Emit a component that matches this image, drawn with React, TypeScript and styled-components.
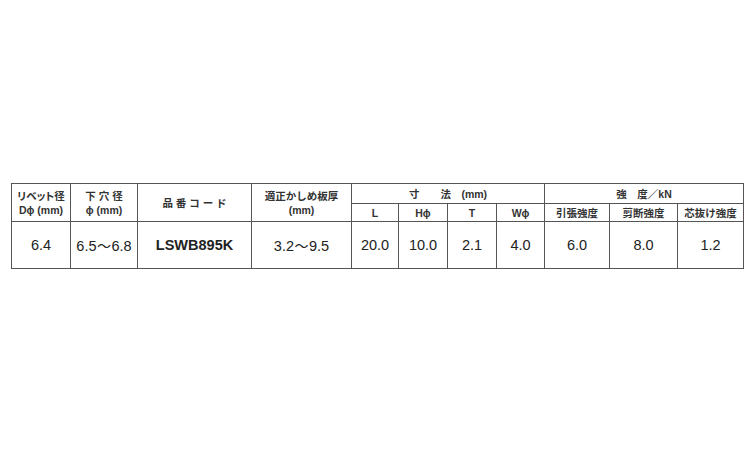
import React from "react";
import styled, { createGlobalStyle } from "styled-components";

const Global = createGlobalStyle`
  html, body { margin: 0; padding: 0; background: #ffffff; }
  body { font-family: "Liberation Sans", "Noto Sans CJK JP", sans-serif; color: #222; }
`;

const Page = styled.div`
  width: 750px;
  height: 450px;
  padding: 183px 0 0 11px;
  box-sizing: border-box;
`;

const Table = styled.table`
  border-collapse: collapse;
  table-layout: fixed;
  width: 732px;
  border: 1px solid #333;
`;

const Th = styled.th<{ $h?: number; $palt?: boolean }>`
  border: 1px solid #555;
  padding: 0;
  height: ${(p) => p.$h ?? 17}px;
  font-family: "Liberation Sans", "Noto Sans CJK JP", sans-serif;
  font-weight: bold;
  font-size: 10.5px;
  line-height: 14px;
  color: #333;
  text-align: center;
  vertical-align: middle;
  white-space: pre;
  font-feature-settings: ${(p) => (p.$palt ? '"palt"' : "normal")};
`;

const Td = styled.td<{ $bold?: boolean }>`
  border: 1px solid #555;
  padding: 0;
  height: 46px;
  font-family: "Liberation Sans", "Noto Sans CJK JP", sans-serif;
  font-weight: ${(p) => (p.$bold ? "bold" : "normal")};
  font-size: 14.5px;
  color: #222;
  text-align: center;
  vertical-align: middle;
  white-space: nowrap;
`;

const Wave = styled.span`
  font-family: "Noto Sans CJK JP", sans-serif;
  font-size: 14px;
  display: inline-block;
  width: 15px;
  letter-spacing: 0;
`;

const widths = [59, 67, 114, 100, 47, 49, 49, 48, 65, 68, 66];

export default function App() {
  return (
    <>
      <Global />
      <Page>
        <Table>
          <colgroup>
            {widths.map((w, i) => (
              <col key={i} style={{ width: w }} />
            ))}
          </colgroup>
          <thead>
            <tr>
              <Th rowSpan={2} $h={37} $palt>{"リベット径\nDϕ (mm)"}</Th>
              <Th rowSpan={2}>{"下 穴 径\nϕ (mm)"}</Th>
              <Th rowSpan={2}>{"品 番 コ ー ド"}</Th>
              <Th rowSpan={2}>{"適正かしめ板厚\n(mm)"}</Th>
              <Th colSpan={4} $h={19}>{"寸　　法　(mm)"}</Th>
              <Th colSpan={3} $h={19}>{"強　度／kN"}</Th>
            </tr>
            <tr>
              <Th>L</Th>
              <Th>Hϕ</Th>
              <Th>T</Th>
              <Th>Wϕ</Th>
              <Th>引張強度</Th>
              <Th>剪断強度</Th>
              <Th>芯抜け強度</Th>
            </tr>
          </thead>
          <tbody>
            <tr>
              <Td>6.4</Td>
              <Td>
                6.5<Wave>〜</Wave>6.8
              </Td>
              <Td $bold>LSWB895K</Td>
              <Td>
                3.2<Wave>〜</Wave>9.5
              </Td>
              <Td>20.0</Td>
              <Td>10.0</Td>
              <Td>2.1</Td>
              <Td>4.0</Td>
              <Td>6.0</Td>
              <Td>8.0</Td>
              <Td>1.2</Td>
            </tr>
          </tbody>
        </Table>
      </Page>
    </>
  );
}
